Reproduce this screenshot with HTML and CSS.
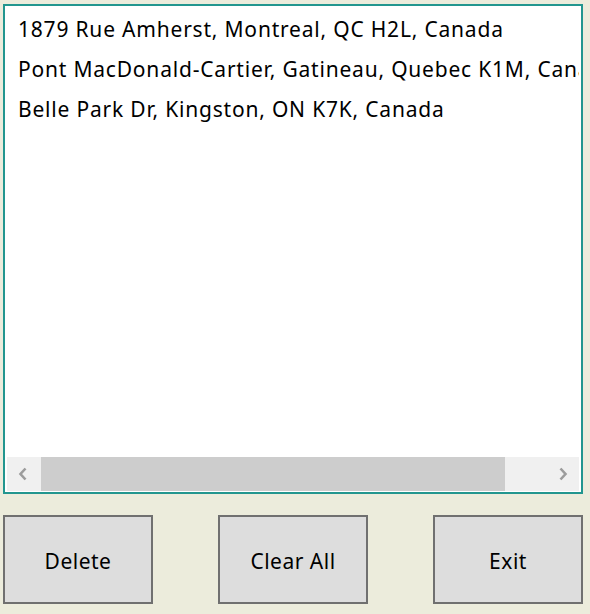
FILE: index.html
```html
<!DOCTYPE html>
<html>
<head>
<meta charset="utf-8">
<link rel="stylesheet" href="styles.css">
</head>
<body>
<div class="app">
  <div class="listbox">
    <div class="items">
      <div class="item">1879 Rue Amherst, Montreal, QC H2L, Canada</div>
      <div class="item">Pont MacDonald-Cartier, Gatineau, Quebec K1M, Canada</div>
      <div class="item">Belle Park Dr, Kingston, ON K7K, Canada</div>
    </div>
    <div class="hscroll">
      <div class="sbtn left"><svg width="10" height="14" viewBox="0 0 10 14"><path d="M7.5 1.5 L2.5 7 L7.5 12.5" fill="none" stroke="#9c9c9c" stroke-width="2.6"/></svg></div>
      <div class="thumb"></div>
      <div class="track"></div>
      <div class="sbtn right"><svg width="10" height="14" viewBox="0 0 10 14"><path d="M2.5 1.5 L7.5 7 L2.5 12.5" fill="none" stroke="#9c9c9c" stroke-width="2.6"/></svg></div>
    </div>
  </div>
  <div class="buttons">
    <button class="btn">Delete</button>
    <button class="btn">Clear All</button>
    <button class="btn">Exit</button>
  </div>
</div>
</body>
</html>
```
FILE: styles.css
```css
html, body {
  margin: 0;
  padding: 0;
  background: #ececdc;
}
body {
  width: 590px;
  height: 614px;
  overflow: hidden;
  font-family: "Noto Sans", "Liberation Sans", sans-serif;
}
.app {
  padding: 4px 0 0 3px;
  width: 580px;
}
.listbox {
  box-sizing: border-box;
  width: 580px;
  height: 490px;
  border: 2px solid #22968f;
  background: #fff;
  padding: 2px 2px 1px 2px;
  display: flex;
  flex-direction: column;
}
.items {
  flex: 1;
  overflow: hidden;
  padding: 1px 0 0 11px;
}
.item {
  white-space: nowrap;
  font-size: 21px;
  letter-spacing: 0.8px;
  line-height: 40px;
  color: #000;
}
.hscroll {
  height: 34px;
  display: flex;
  background: #f0f0f0;
}
.sbtn {
  display: flex;
  align-items: center;
}
.sbtn.left {
  width: 34px;
  padding-left: 11px;
  box-sizing: border-box;
}
.sbtn.right {
  width: 74px;
  justify-content: flex-end;
  padding-right: 11px;
  box-sizing: border-box;
}
.thumb {
  width: 464px;
  background: #cdcdcd;
}
.track {
  flex: 1;
}
.buttons {
  display: flex;
  gap: 65px;
  margin-top: 21px;
}
.btn {
  box-sizing: border-box;
  width: 150px;
  height: 89px;
  border: 2px solid #707070;
  background: #dddddd;
  font-family: "Noto Sans", "Liberation Sans", sans-serif;
  font-size: 21px;
  letter-spacing: 0.5px;
  color: #000;
  padding: 2px 0 0 0;
  margin: 0;
}
```
